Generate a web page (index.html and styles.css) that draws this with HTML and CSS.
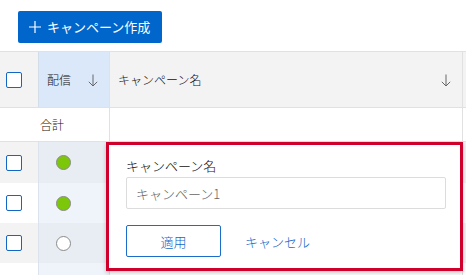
FILE: index.html
```html
<!DOCTYPE html>
<html lang="ja">
<head>
<meta charset="utf-8">
<link rel="stylesheet" href="styles.css">
</head>
<body>
<div class="page">
  <div class="toolbar">
    <button class="create" type="button">
      <svg class="plus" width="12" height="12" viewBox="0 0 12 12"><path d="M6 0V12M0 6H12" stroke="#fff" stroke-width="1.2" fill="none"/></svg>
      <span>キャンペーン作成</span>
    </button>
  </div>
  <div class="table">
    <div class="row head">
      <div class="cell c1"><span class="cb"></span></div>
      <div class="cell c2"><span class="htext">配信</span><svg class="arrow" width="10" height="13" viewBox="0 0 10 13"><path d="M5 0.5V12M0.8 7.8L5 12L9.2 7.8" stroke="#666" stroke-width="1" fill="none"/></svg></div>
      <div class="cell c3"><span class="htext">キャンペーン名</span><svg class="arrow" width="10" height="13" viewBox="0 0 10 13"><path d="M5 0.5V12M0.8 7.8L5 12L9.2 7.8" stroke="#666" stroke-width="1" fill="none"/></svg></div>
      <div class="cell c4"></div>
    </div>
    <div class="row total">
      <div class="cell c12">合計</div>
      <div class="cell c3"></div>
      <div class="cell c4"></div>
    </div>
    <div class="row data odd first">
      <div class="cell c1"><span class="cb"></span></div>
      <div class="cell c2"><span class="dot on"></span></div>
      <div class="cell c3"></div>
      <div class="cell c4"></div>
    </div>
    <div class="row data">
      <div class="cell c1"><span class="cb"></span></div>
      <div class="cell c2"><span class="dot on"></span></div>
      <div class="cell c3"></div>
      <div class="cell c4"></div>
    </div>
    <div class="row data odd">
      <div class="cell c1"><span class="cb"></span></div>
      <div class="cell c2"><span class="dot"></span></div>
      <div class="cell c3"></div>
      <div class="cell c4"></div>
    </div>
    <div class="row data filler">
      <div class="cell c1"></div>
      <div class="cell c2"></div>
      <div class="cell c3"></div>
      <div class="cell c4"></div>
    </div>
    <div class="popup">
      <label class="plabel" for="cname">キャンペーン名</label>
      <input id="cname" class="pinput" type="text" placeholder="キャンペーン1">
      <div class="pactions">
        <button class="apply" type="button">適用</button>
        <button class="cancel" type="button">キャンセル</button>
      </div>
    </div>
  </div>
</div>
</body>
</html>
```

FILE: styles.css
```css
* { box-sizing: border-box; }
html, body { margin: 0; padding: 0; background: #fff; }
body {
  font-family: "Noto Sans CJK JP", "Noto Sans", sans-serif;
  font-weight: 300;
  color: #111;
  width: 466px;
  height: 275px;
  overflow: hidden;
}
.page { padding-top: 11px; }
.toolbar { padding-left: 18px; height: 32px; }
.create {
  display: flex;
  align-items: center;
  gap: 6px;
  height: 32px;
  width: 144px;
  padding: 0 0 0 11px;
  border: none;
  border-radius: 2px;
  background: #0066cc;
  color: #fff;
  font-family: inherit;
  font-weight: 400;
  font-size: 13px;
  line-height: 18px;
}
.create .plus { flex: none; }

.table { position: relative; margin-top: 8px; }
.row {
  display: grid;
  grid-template-columns: 38px 72px 353px 1fr;
}
.cell { display: flex; align-items: center; }
.head {
  height: 57px;
  background: #f3f3f3;
  border-top: 1px solid #e1e1e1;
  border-bottom: 1px solid #e1e1e1;
  font-size: 12px;
}
.head .c2 {
  background: #dbe8f9;
  border-left: 1px solid #d3dde9;
  border-right: 1px solid #e1e1e1;
  padding-left: 8px;
  justify-content: space-between;
  padding-right: 11px;
}
.head .c3 {
  border-right: 1px solid #e1e1e1;
  padding-left: 8px;
  padding-right: 11px;
  justify-content: space-between;
}
.arrow { flex: none; margin-top: 1px; }
.c1 { justify-content: flex-start; padding-left: 6px; }
.cb {
  display: block;
  width: 16px;
  height: 16px;
  border: 1px solid #1266c4;
  border-radius: 2px;
  background: #fff;
}
.total {
  height: 34px;
  border-bottom: 1px solid #e1e1e1;
  font-size: 12px;
  background: #fff;
}
.total .c12 {
  grid-column: 1 / span 2;
  padding-left: 40px;
  border-right: 1px solid #e1e1e1;
}
.total .c3 { border-right: 1px solid #e1e1e1; }
.data { height: 40px; background: #fff; }
.data.first { height: 41px; }
.data.odd { background: #f3f3f3; }
.data .c2 {
  background: #eff4fb;
  border-left: 1px solid #dde3ec;
  border-right: 1px solid #e1e1e1;
  padding-left: 17px;
}
.data.odd .c2 { background: #e8edf4; }
.data .c3 { border-right: 1px solid #e1e1e1; }
.filler { height: 20px; }
.dot {
  display: block;
  width: 15px;
  height: 15px;
  border-radius: 50%;
  border: 1px solid #8a8a8a;
  background: #fff;
}
.dot.on { background: #7cc70a; }

.popup {
  position: absolute;
  left: 106px;
  top: 91px;
  width: 357px;
  height: 129px;
  border: 3px solid #d0002c;
  background: #fff;
  box-shadow: 0 2px 4px rgba(0, 0, 0, 0.22);
  padding: 12px 14px 0 17px;
  display: flex;
  flex-direction: column;
}
.plabel {
  font-size: 13px;
  line-height: 18px;
  color: #111;
  margin-bottom: 2px;
}
.pinput {
  height: 32px;
  width: 320px;
  border: 1px solid #dcdcdc;
  border-radius: 2px;
  padding: 0 9px;
  font-family: inherit;
  font-weight: 300;
  font-size: 13px;
  color: #333;
  outline: none;
}
.pinput::placeholder { color: #666; }
.pactions {
  display: flex;
  align-items: center;
  gap: 24px;
  margin-top: 16px;
}
.apply {
  width: 95px;
  height: 32px;
  border: 1px solid #1a6ec9;
  border-radius: 2px;
  background: #fff;
  color: #1367c4;
  font-family: inherit;
  font-weight: 300;
  font-size: 13px;
  padding: 0;
}
.cancel {
  border: none;
  background: none;
  padding: 0;
  color: #1367c4;
  font-family: inherit;
  font-weight: 300;
  font-size: 13px;
}
```
